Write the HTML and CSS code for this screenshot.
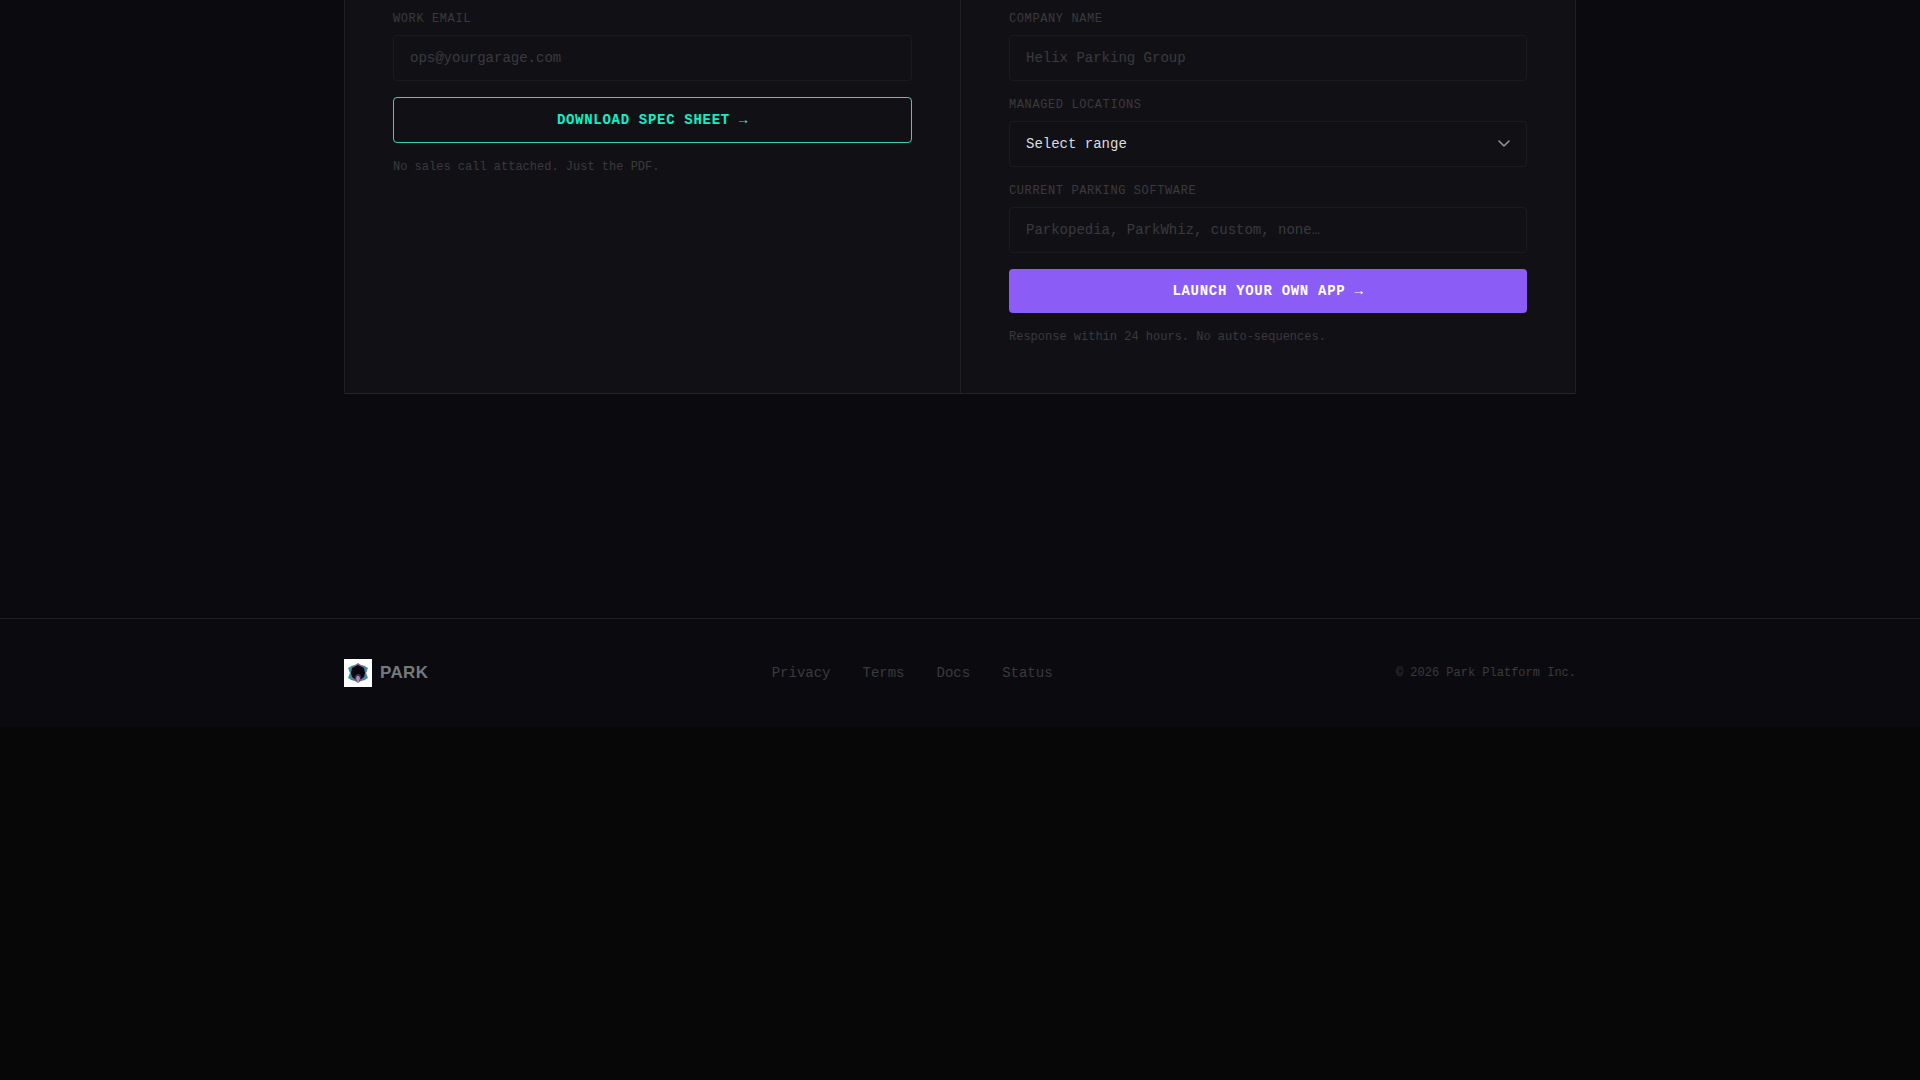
FILE: index.html
```html
<!DOCTYPE html>
<html lang="en">
<head>
<meta charset="utf-8">
<meta name="viewport" content="width=device-width, initial-scale=1">
<title>Park Platform</title>
<link rel="stylesheet" href="styles.css">
</head>
<body>
<div class="site">
  <main class="section">
    <div class="container">
      <div class="panels">
        <form class="panel">
          <div class="field">
            <label for="email">Work email</label>
            <input id="email" type="email" placeholder="ops@yourgarage.com">
          </div>
          <button class="btn btn-outline" type="button">Download spec sheet →</button>
          <p class="note">No sales call attached. Just the PDF.</p>
        </form>
        <form class="panel">
          <div class="field">
            <label for="company">Company name</label>
            <input id="company" type="text" placeholder="Helix Parking Group">
          </div>
          <div class="field">
            <label for="locations">Managed locations</label>
            <div class="select">
              <select id="locations">
                <option>Select range</option>
                <option>1–5</option>
                <option>6–25</option>
                <option>26+</option>
              </select>
              <svg class="chevron" viewBox="0 0 14 10" width="14" height="10" aria-hidden="true"><path d="M2 2l5 5 5-5" fill="none" stroke="currentColor" stroke-width="1.5" stroke-linecap="round" stroke-linejoin="round"/></svg>
            </div>
          </div>
          <div class="field">
            <label for="software">Current parking software</label>
            <input id="software" type="text" placeholder="Parkopedia, ParkWhiz, custom, none…">
          </div>
          <button class="btn btn-solid" type="button">Launch your own app →</button>
          <p class="note">Response within 24 hours. No auto-sequences.</p>
        </form>
      </div>
    </div>
  </main>
  <footer class="footer">
    <div class="container footer-row">
      <a class="brand" href="#">
        <svg class="logo" viewBox="0 0 28 28" width="28" height="28" aria-hidden="true">
          <rect width="28" height="28" fill="#fff"/>
          <path d="M14 4l3 2 4 1 2 3-1 4 1 4-2 3-4 1-3 2-3-2-4-1-2-3 1-4-1-4 2-3 4-1z" fill="#76648c"/>
          <path d="M4 9l4-2 1 2-2 2v6l2 2-1 2-4-2 2-5zM24 9l-4-2-1 2 2 2v6l-2 2 1 2 4-2-2-5z" fill="#3a93a3"/>
          <path d="M14 6l6 3 1 5-1 4-3 2h-6l-3-2-1-4 1-5z" fill="#060510"/>
          <path d="M11 17l2-2h2l2 2v1l-1 4h-4l-1-4z" fill="#3f3352"/>
          <path d="M13 17h2l1 2-1 4h-2l-1-4z" fill="#a48cb2"/>
        </svg>
        <span>PARK</span>
      </a>
      <nav class="links" aria-label="Footer">
        <a href="#">Privacy</a>
        <a href="#">Terms</a>
        <a href="#">Docs</a>
        <a href="#">Status</a>
      </nav>
      <p class="copyright">© 2026 Park Platform Inc.</p>
    </div>
  </footer>
</div>
</body>
</html>
```
FILE: styles.css
```css
:root {
  --mono: "Liberation Mono", monospace;
  --line: #1f1f23;
  --muted: #3a3a3d;
  --card: #111115;
}
* { box-sizing: border-box; }
body {
  margin: 0;
  min-height: 100vh;
  background: #070707;
  color: #e8e8ed;
  font-family: var(--mono);
}
p { margin: 0; }
.site { background: #0a0a0f; }
.container {
  max-width: 1280px;
  margin: 0 auto;
  padding: 0 24px;
}
.section { padding-bottom: 224px; }
.panels {
  display: grid;
  grid-template-columns: 1fr 1fr;
  border: 1px solid var(--line);
  border-top: 0;
  border-bottom-color: #242428;
}
.panel {
  display: flex;
  flex-direction: column;
  gap: 16px;
  padding: 11px 48px 48px;
  background: var(--card);
}
.panel + .panel { border-left: 1px solid var(--line); }
.field {
  display: flex;
  flex-direction: column;
  gap: 8px;
}
label {
  color: var(--muted);
  font-size: 12px;
  line-height: 16px;
  letter-spacing: 0.05em;
  text-transform: uppercase;
}
input, select {
  width: 100%;
  height: 46px;
  padding: 0 16px;
  border: 1px solid #1b1b1f;
  border-radius: 4px;
  background: var(--card);
  color: #dcdce0;
  font: 14px/16px var(--mono);
  appearance: none;
}
input::placeholder { color: var(--muted); opacity: 1; }
.select { position: relative; }
.chevron {
  position: absolute;
  right: 16px;
  top: 18px;
  color: #98989c;
  pointer-events: none;
}
.btn {
  padding: 14px 24px;
  border: 0;
  border-radius: 4px;
  font: bold 14px/16px var(--mono);
  letter-spacing: 0.05em;
  text-transform: uppercase;
}
.btn-outline {
  border: 1px solid #3ad0b4;
  background: transparent;
  color: #10f0c8;
}
.btn-solid { background: #8b5cf6; color: #fff; }
.note {
  color: var(--muted);
  font-size: 12px;
  line-height: 16px;
}
.footer {
  padding: 40px 0;
  border-top: 1px solid var(--line);
  background: #0b0b0f;
}
.footer-row {
  display: flex;
  align-items: center;
  justify-content: space-between;
}
.footer a { text-decoration: none; }
.brand {
  display: flex;
  align-items: center;
  gap: 8px;
  color: #77787c;
  font: bold 17px/24px "Liberation Sans", sans-serif;
  letter-spacing: 0.02em;
}
.logo { display: block; }
.links { display: flex; gap: 32px; }
.links a { color: var(--muted); font-size: 14px; line-height: 20px; }
.copyright { color: var(--muted); font-size: 12px; line-height: 16px; }
```
